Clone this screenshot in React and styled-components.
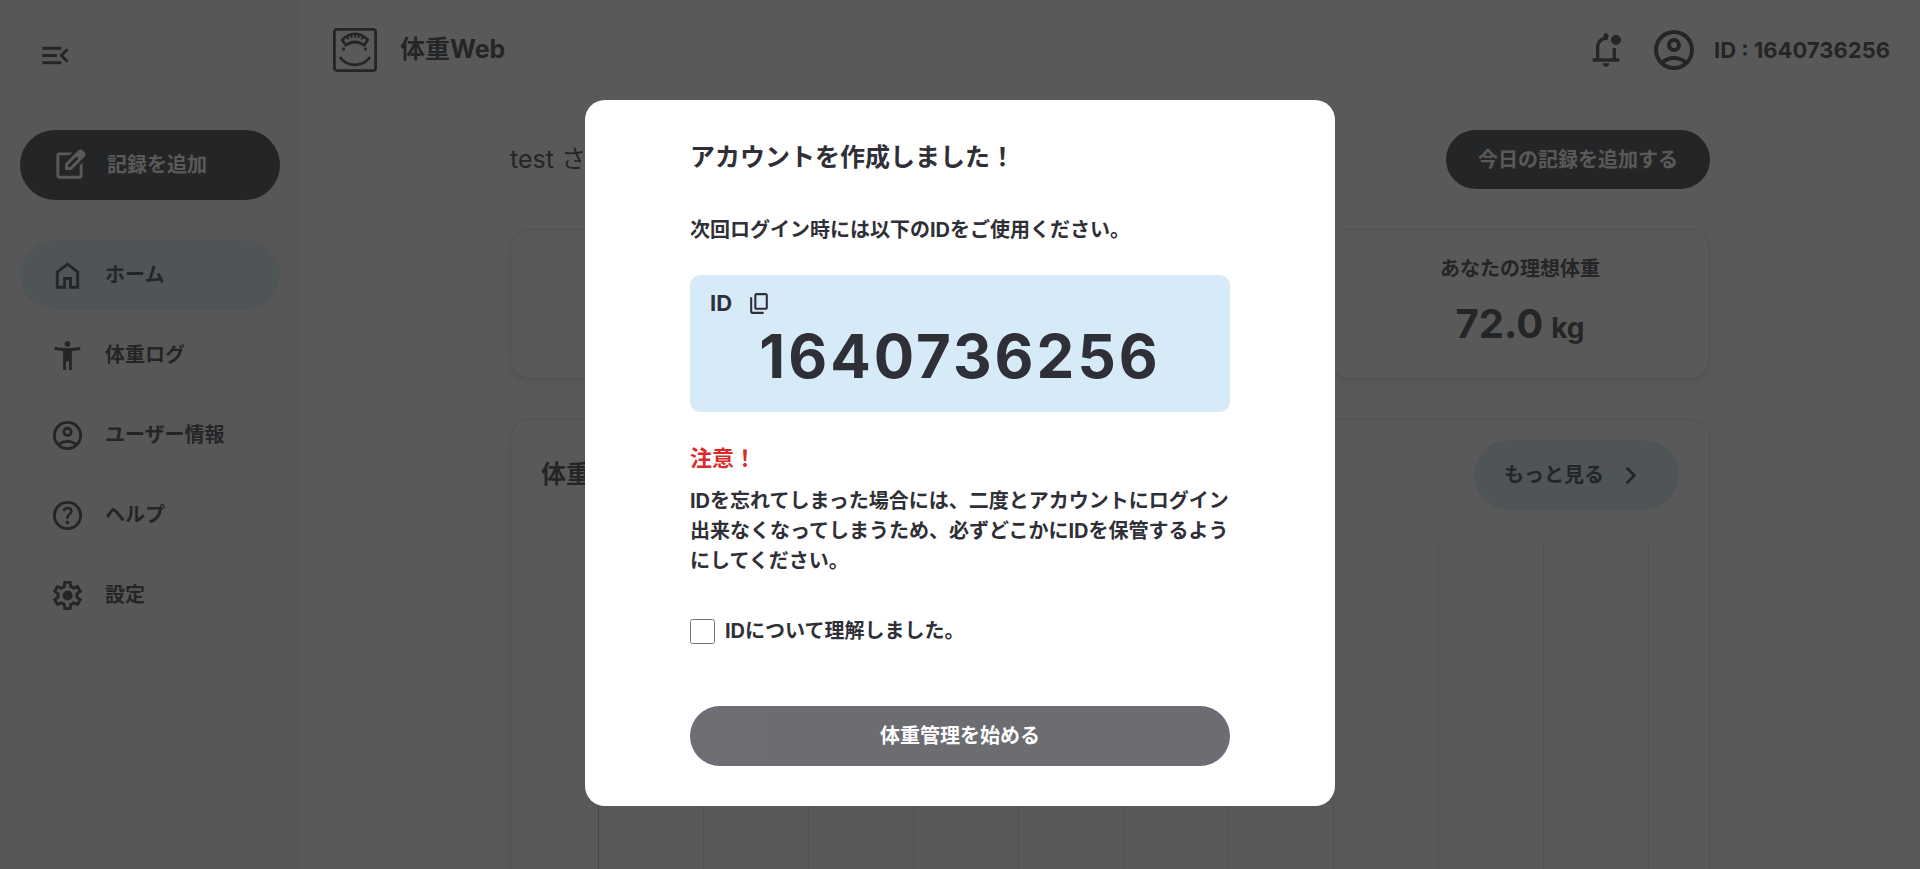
import React, { useState } from "react";
import styled, { createGlobalStyle, css } from "styled-components";

const color = {
  ink: "#2f3037",
  button: "#2f3037",
  white: "#ffffff",
  sidebar: "#f8f8f8",
  accent: "#d7eaf7",
  line: "#e0e0e0",
  axis: "#c0c0c0",
  danger: "#d92b2b",
};

const GlobalStyle = createGlobalStyle`
  *, *::before, *::after { box-sizing: border-box; }
  body {
    margin: 0;
    background: ${color.white};
    color: ${color.ink};
    font-family: Inter, "Noto Sans CJK JP", sans-serif;
    font-size: 20px;
    font-weight: 700;
    line-height: 1.5;
  }
  h1, h2, p, ul { margin: 0; padding: 0; }
  button { font: inherit; color: inherit; cursor: pointer; }
`;

/* ---------- icons ---------- */

const ring =
  "q-83 0-156-31.5T197-197q-54-54-85.5-127T80-480q0-83 31.5-156T197-763q54-54 127-85.5T480-880q83 0 156 31.5T763-763q54 54 85.5 127T880-480q0 83-31.5 156T763-197q-54 54-127 85.5T480-80Z";

const paths = {
  menuOpen:
    "M120-240v-80h520v80H120Zm664-40L584-480l200-200 56 56-144 144 144 144-56 56ZM120-440v-80h400v80H120Zm0-200v-80h520v80H120Z",
  edit:
    "M200-120q-33 0-56.5-23.5T120-200v-560q0-33 23.5-56.5T200-840h357l-80 80H200v560h560v-278l80-80v358q0 33-23.5 56.5T760-120H200ZM360-360v-170l367-367q12-12 27-18t30-6q16 0 30.5 6t26.5 18l56 57q11 12 17 26.5t6 29.5q0 15-5.5 29.5T897-728L530-360H360ZM440-440h56l232-232-28-28-29-28-231 231v57Z",
  home:
    "M240-200h120v-240h240v240h120v-360L480-740 240-560v360Zm-80 80v-480l320-240 320 240v480H520v-240h-80v240H160Z",
  body:
    "M480-720q-33 0-56.5-23.5T400-800q0-33 23.5-56.5T480-880q33 0 56.5 23.5T560-800q0 33-23.5 56.5T480-720ZM360-80v-520q-60-5-122-15t-118-25l20-80q78 21 166 30.5t174 9.5q86 0 174-9.5T820-720l20 80q-56 15-118 25t-122 15v520h-80v-240h-80v240h-80Z",
  account:
    "M234-276q51-39 114-61.5T480-360q69 0 132 22.5T726-276q35-41 54.5-93T800-480q0-133-93.5-226.5T480-800q-133 0-226.5 93.5T160-480q0 59 19.5 111t54.5 93Zm246-164q-59 0-99.5-40.5T340-580q0-59 40.5-99.5T480-720q59 0 99.5 40.5T620-580q0 59-40.5 99.5T480-440Zm0 360" +
    ring +
    "m0-80q53 0 100-15.5t86-44.5q-39-29-86-44.5T480-280q-53 0-100 15.5T294-220q39 29 86 44.5T480-160Zm0-360q26 0 43-17t17-43q0-26-17-43t-43-17q-26 0-43 17t-17 43q0 26 17 43t43 17Z",
  help:
    "M478-240q21 0 35.5-14.5T528-290q0-21-14.5-35.5T478-340q-21 0-35.5 14.5T428-290q0 21 14.5 35.5T478-240Zm-36-154h74q0-33 7.5-52t42.5-52q26-26 41-49.5t15-56.5q0-56-41-86t-97-30q-57 0-92.5 30T342-618l66 26q5-18 22.5-39t53.5-21q32 0 48 17.5t16 38.5q0 20-12 37.5T506-526q-44 39-54 59t-10 73Zm38 314" +
    ring +
    "m0-80q134 0 227-93t93-227q0-134-93-227t-227-93q-134 0-227 93t-93 227q0 134 93 227t227 93Z",
  settings:
    "m370-80-16-128q-13-5-24.5-12T307-235l-119 50L78-375l103-78q-1-7-1-13.5v-27q0-6.5 1-13.5L78-585l110-190 119 50q11-8 23-15t24-12l16-128h220l16 128q13 5 24.5 12t22.5 15l119-50 110 190-103 78q1 7 1 13.5v27q0 6.5-2 13.5l103 78-110 190-118-50q-11 8-23 15t-24 12L590-80H370Zm70-80h79l14-106q31-8 57.5-23.5T639-327l99 41 39-68-86-65q5-14 7-29.5t2-31.5q0-16-2-31.5t-7-29.5l86-65-39-68-99 42q-22-23-48.5-38.5T533-694l-13-106h-79l-14 106q-31 8-57.5 23.5T321-633l-99-41-39 68 86 64q-5 15-7 30t-2 32q0 16 2 31t7 30l-86 65 39 68 99-42q22 23 48.5 38.5T427-266l13 106Zm42-180q58 0 99-41t41-99q0-58-41-99t-99-41q-59 0-99.5 41T342-480q0 58 40.5 99t99.5 41Z",
  bell:
    "M480-80q-33 0-56.5-23.5T400-160h160q0 33-23.5 56.5T480-80ZM160-200v-80h80v-280q0-83 50-147.5T420-792v-28q0-25 17.5-42.5T480-880q25 0 42.5 17.5T540-820v13q-11 22-16 45t-4 47q-10-2-19.5-3.5T480-720q-66 0-113 47t-47 113v280h320v-257q18 8 38.5 12.5T720-520v240h80v80H160Zm560-400q-50 0-85-35t-35-85q0-50 35-85t85-35q50 0 85 35t35 85q0 50-35 85t-85 35Z",
  copy:
    "M360-240q-33 0-56.5-23.5T280-320v-480q0-33 23.5-56.5T360-880h360q33 0 56.5 23.5T800-800v480q0 33-23.5 56.5T720-240H360Zm0-80h360v-480H360v480ZM200-80q-33 0-56.5-23.5T120-160v-560h80v560h440v80H200Z",
  chevron: "M504-480 320-664l56-56 240 240-240 240-56-56 184-184Z",
};

const Svg = styled.svg`
  display: block;
  flex: none;
  fill: currentColor;
`;

const Icon = ({ name, size = 35 }) => (
  <Svg viewBox="0 -960 960 960" width={size} height={size} aria-hidden="true">
    <path d={paths[name]} />
  </Svg>
);

/* Bathroom scale with a smiling face */
const Logo = () => (
  <svg width="44" height="44" viewBox="0 0 44 44" fill="none" stroke="currentColor" aria-hidden="true">
    <rect x="1.4" y="1.4" width="41.2" height="41.2" rx="2.5" strokeWidth="2.8" />
    <path
      d="M9.200 11.800Q22 0 34.800 11.800L31.200 17.200Q22 10.800 12.800 17.200Z"
      strokeWidth="2.800"
      strokeLinejoin="round"
    />
    <path d="M14 8.500l1.600 3M18 6.500l.8 3.600M22 5.500v4.300M26 6.500l-.8 3.600M30 8.500l-1.600 3" strokeWidth="2" />
    <rect x="9" y="19.600" width="3" height="3" rx="1" fill="currentColor" stroke="none" />
    <rect x="31" y="19.600" width="3" height="3" rx="1" fill="currentColor" stroke="none" />
    <path d="M6.800 29C14 39.400 30 39.400 37 29" strokeWidth="2.700" />
  </svg>
);

/* ---------- page ---------- */

const Shell = styled.div`
  display: flex;
  height: 100vh;
  overflow: hidden;
`;

const Sidebar = styled.aside`
  flex: 0 0 300px;
  padding: 20px;
  background: ${color.sidebar};
`;

const MenuButton = styled.button`
  display: flex;
  align-items: center;
  justify-content: center;
  width: 70px;
  height: 70px;
  margin-bottom: 40px;
  padding: 0;
  border: 0;
  border-radius: 35px;
  background: none;
`;

const pill = css`
  display: flex;
  align-items: center;
  border-radius: 35px;
`;

const AddButton = styled.button`
  ${pill}
  gap: 20px;
  width: 100%;
  height: 70px;
  margin-bottom: 40px;
  padding: 0 30px;
  border: 2px solid ${color.button};
  background: ${color.button};
  color: ${color.white};
`;

const NavList = styled.ul`
  display: flex;
  flex-direction: column;
  gap: 10px;
  list-style: none;
`;

const NavLink = styled.a`
  ${pill}
  gap: 20px;
  height: 70px;
  padding: 0 30px;
  background: ${(p) => (p.$active ? color.accent : "transparent")};
  color: inherit;
  text-decoration: none;
`;

const Page = styled.div`
  flex: 1;
  min-width: 0;
`;

const Header = styled.header`
  display: flex;
  align-items: center;
  justify-content: space-between;
  height: 100px;
  padding: 0 30px 0 33px;
`;

const Brand = styled.a`
  display: flex;
  align-items: center;
  gap: 23px;
  color: inherit;
  font-size: 25px;
  text-decoration: none;
`;

const Account = styled.div`
  display: flex;
  align-items: center;
  font-size: 22px;
`;

const BellButton = styled.button`
  margin-right: 24px;
  padding: 0;
  border: 0;
  background: none;
`;

const AccountLink = styled.a`
  display: flex;
  align-items: center;
  gap: 16px;
  color: inherit;
  text-decoration: none;
`;

const Main = styled.main`
  display: flex;
  flex-direction: column;
  max-width: 1200px;
  margin: 0 auto;
  padding-top: 30px;
`;

const Greeting = styled.div`
  display: flex;
  align-items: center;
  justify-content: space-between;
  margin-bottom: 40px;
  font-size: 25px;
  font-weight: 400;
`;

const TodayButton = styled.button`
  height: 59px;
  padding: 0 30px;
  border: 2px solid ${color.button};
  border-radius: 30px;
  background: ${color.button};
  color: ${color.white};
  font-size: 20px;
  font-weight: 700;
`;

const card = css`
  border: 1px solid ${color.line};
  border-radius: 20px;
  background: ${color.white};
  box-shadow: 0 3px 6px rgba(0, 0, 0, 0.12);
`;

const Stats = styled.div`
  display: grid;
  grid-template-columns: repeat(3, 1fr);
  gap: 30px;
  margin-bottom: 40px;
`;

const Stat = styled.section`
  ${card}
  display: flex;
  flex-direction: column;
  align-items: center;
  gap: 16px;
  height: 150px;
  padding-top: 24px;
`;

const StatLabel = styled.h2`
  font-size: 20px;
`;

const StatValue = styled.p`
  display: flex;
  align-items: baseline;
  gap: 8px;
  font-size: 40px;
  line-height: 48px;
`;

const Unit = styled.span`
  font-size: 28px;
`;

const ChartCard = styled.section`
  ${card}
  padding: 20px 30px;
`;

const ChartHead = styled.div`
  display: flex;
  align-items: center;
  justify-content: space-between;
  margin-bottom: 33px;
`;

const ChartTitle = styled.h2`
  font-size: 25px;
`;

const MoreLink = styled.a`
  ${pill}
  gap: 10px;
  height: 70px;
  padding: 0 30px;
  background: ${color.accent};
  color: inherit;
  text-decoration: none;
`;

const Plot = styled.div`
  display: grid;
  grid-template-columns: repeat(10, 1fr);
  height: 500px;
  margin: 0 30px 0 57px;
  border-right: 1px solid ${color.line};
`;

const PlotColumn = styled.div`
  border-left: 1px solid ${(p) => (p.$axis ? color.axis : color.line)};
`;

/* ---------- dialog ---------- */

const Overlay = styled.div`
  position: fixed;
  inset: 0;
  display: flex;
  align-items: flex-start;
  justify-content: center;
  padding-top: 100px;
  background: rgba(34, 34, 34, 0.75);
`;

const Dialog = styled.div`
  width: 750px;
  max-width: 100%;
  padding: 40px 105px;
  border-radius: 20px;
  background: ${color.white};
`;

const DialogTitle = styled.h1`
  margin-bottom: 40px;
  font-size: 25px;
  line-height: 35px;
`;

const Text = styled.p`
  line-height: 30px;
`;

const IdBox = styled.div`
  margin: 30px 0;
  padding: 12px 20px 20px;
  border-radius: 10px;
  background: ${color.accent};
`;

const IdLabel = styled.div`
  display: flex;
  align-items: center;
  gap: 15px;
  font-size: 22px;
  line-height: 33px;
`;

const CopyButton = styled.button`
  padding: 0;
  border: 0;
  background: none;
`;

const IdNumber = styled.p`
  font-size: 60px;
  letter-spacing: 3px;
  line-height: 72px;
  text-align: center;
`;

const Warning = styled.h2`
  margin-bottom: 11px;
  color: ${color.danger};
  font-size: 22px;
  line-height: 33px;
`;

const Agree = styled.label`
  display: flex;
  align-items: center;
  gap: 10px;
  margin: 40px 0 60px;
`;

const Checkbox = styled.input`
  width: 25px;
  height: 25px;
  margin: 0;
`;

const StartButton = styled.button`
  display: block;
  width: 100%;
  height: 60px;
  border: 0;
  border-radius: 30px;
  background: ${color.ink};
  color: ${color.white};

  &:disabled {
    opacity: 0.7;
    cursor: default;
  }
`;

const userId = "1640736256";

const navItems = [
  { icon: "home", label: "ホーム", active: true },
  { icon: "body", label: "体重ログ" },
  { icon: "account", label: "ユーザー情報" },
  { icon: "help", label: "ヘルプ" },
  { icon: "settings", label: "設定" },
];

/* The first two figures stay empty until a weight is recorded */
const stats = [
  { id: "current" },
  { id: "target" },
  { id: "ideal", label: "あなたの理想体重", value: "72.0", unit: "kg" },
];

export default function App() {
  const [agreed, setAgreed] = useState(false);

  return (
    <>
      <GlobalStyle />
      <Shell lang="ja">
        <Sidebar>
          <MenuButton type="button" aria-label="メニュー">
            <Icon name="menuOpen" />
          </MenuButton>
          <AddButton type="button">
            <Icon name="edit" />
            記録を追加
          </AddButton>
          <nav>
            <NavList>
              {navItems.map((item) => (
                <li key={item.label}>
                  <NavLink href="#" $active={item.active}>
                    <Icon name={item.icon} />
                    {item.label}
                  </NavLink>
                </li>
              ))}
            </NavList>
          </nav>
        </Sidebar>
        <Page>
          <Header>
            <Brand href="#">
              <Logo />
              体重Web
            </Brand>
            <Account>
              <BellButton type="button" aria-label="お知らせ">
                <Icon name="bell" size={40} />
              </BellButton>
              <AccountLink href="#">
                <Icon name="account" size={48} />
                ID : {userId}
              </AccountLink>
            </Account>
          </Header>
          <Main>
            <Greeting>
              <p>test さん</p>
              <TodayButton type="button">今日の記録を追加する</TodayButton>
            </Greeting>
            <Stats>
              {stats.map((s) => (
                <Stat key={s.id}>
                  {s.label && <StatLabel>{s.label}</StatLabel>}
                  {s.value && (
                    <StatValue>
                      {s.value}
                      <Unit>{s.unit}</Unit>
                    </StatValue>
                  )}
                </Stat>
              ))}
            </Stats>
            <ChartCard>
              <ChartHead>
                <ChartTitle>体重</ChartTitle>
                <MoreLink href="#">
                  もっと見る
                  <Icon name="chevron" />
                </MoreLink>
              </ChartHead>
              <Plot>
                {Array.from({ length: 10 }, (_, i) => (
                  <PlotColumn key={i} $axis={i === 0} />
                ))}
              </Plot>
            </ChartCard>
          </Main>
        </Page>
      </Shell>
      <Overlay lang="ja">
        <Dialog role="dialog" aria-modal="true" aria-labelledby="dialog-title">
          <DialogTitle id="dialog-title">アカウントを作成しました！</DialogTitle>
          <Text>次回ログイン時には以下のIDをご使用ください。</Text>
          <IdBox>
            <IdLabel>
              ID
              <CopyButton type="button" aria-label="IDをコピー">
                <Icon name="copy" size={25} />
              </CopyButton>
            </IdLabel>
            <IdNumber>{userId}</IdNumber>
          </IdBox>
          <Warning>注意！</Warning>
          <Text>
            IDを忘れてしまった場合には、二度とアカウントにログイン出来なくなってしまうため、必ずどこかにIDを保管するようにしてください。
          </Text>
          <Agree>
            <Checkbox type="checkbox" checked={agreed} onChange={(e) => setAgreed(e.target.checked)} />
            IDについて理解しました。
          </Agree>
          <StartButton type="button" disabled={!agreed}>
            体重管理を始める
          </StartButton>
        </Dialog>
      </Overlay>
    </>
  );
}
